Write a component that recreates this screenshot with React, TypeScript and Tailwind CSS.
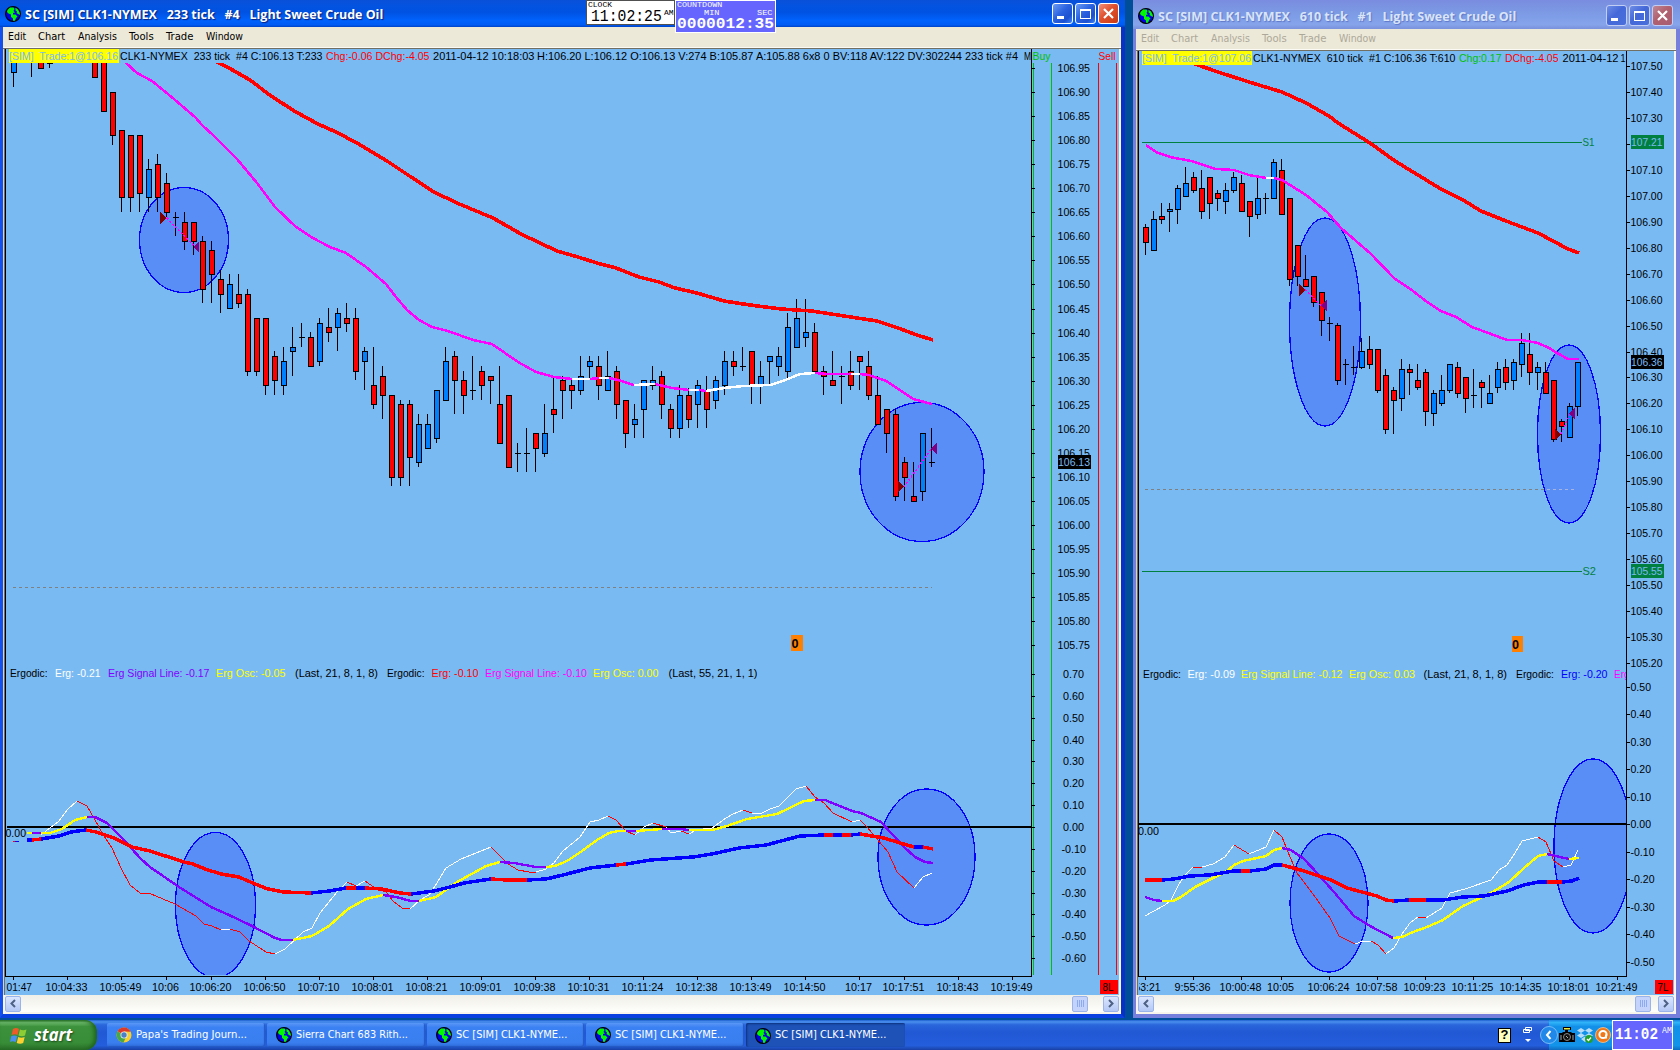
import React, { useLayoutEffect, useRef, useState } from "react";

const SANS = "font-['Liberation_Sans',Arial,sans-serif]";
const UI = "font-['DejaVu_Sans_Condensed','DejaVu_Sans',Tahoma,sans-serif]";

type Candle = [number, "r" | "b" | "k", number, number, number, number];

/** Text squeezed or stretched to an exact width. */
function Fit({ w, className = "", children }: { w: number; className?: string; children: string }) {
  const ref = useRef<HTMLSpanElement>(null);
  const [scale, setScale] = useState(1);
  useLayoutEffect(() => {
    if (ref.current) setScale(w / ref.current.offsetWidth);
  }, [w]);
  return (
    <span className={`block shrink-0 whitespace-pre ${className}`} style={{ width: w }}>
      <span ref={ref} className="block w-max origin-left" style={{ transform: `scaleX(${scale})` }}>
        {children}
      </span>
    </span>
  );
}

/** Chart text placed between x1 and x2, centred vertically on y. */
function T({ x1, x2, y, c = "#000", children }: { x1: number; x2: number; y: number; c?: string; children: string }) {
  return (
    <text
      x={x1 - 0.5}
      y={Math.round(y) + 4}
      fill={c}
      fontSize="11"
      textLength={x2 - x1}
      lengthAdjust="spacingAndGlyphs"
      className="whitespace-pre"
    >
      {children}
    </text>
  );
}

const COLORS: Record<string, string> = {
  r: "#ff0000",
  b: "#0000ff",
  w: "#ffffff",
  m: "#ff00ff",
  y: "#ffff00",
  p: "#8000ff",
};

/** Polyline whose colour changes at each "|"; a run starts at the end of the one before. */
function Line({ d, w }: { d: string; w: number }) {
  let last = "";
  return (
    <g fill="none" strokeWidth={w} strokeLinejoin="round">
      {d.split("|").map((run, i) => {
        const parts = run.trim().split(/\s+/);
        const pts = [last, ...parts.slice(1)].filter(Boolean);
        last = pts[pts.length - 1];
        return <polyline key={i} points={pts.join(" ")} stroke={COLORS[parts[0]]} />;
      })}
    </g>
  );
}

function Candles({ data, x0, step }: { data: Candle[]; x0: number; step: number }) {
  return (
    <g>
      {data.map(([i, c, hi, top, bot, lo]) => {
        const x = x0 + i * step;
        return (
          <g key={i}>
            <rect x={x} y={hi} width="1" height={lo - hi} fill="#000" />
            {c === "k" ? (
              <rect x={x - 2} y={top} width="6" height="1" fill="#000" />
            ) : (
              <>
                <rect x={x - 2} y={top} width="6" height={bot - top} fill="#000" />
                <rect x={x - 1} y={top + 1} width="4" height={bot - top - 2} fill={c === "r" ? "#ff0000" : "#0080ff"} />
              </>
            )}
          </g>
        );
      })}
    </g>
  );
}

function Oval({ cx, cy, rx, ry }: { cx: number; cy: number; rx: number; ry: number }) {
  return <ellipse cx={cx} cy={cy} rx={rx} ry={ry} fill="#5a8ef7" stroke="#0000ff" strokeWidth="1.300" />;
}

const CANDLES_233: Candle[] = [
  [0, "b", 60, 60, 73, 87], [2, "k", 60, 60, 60, 77], [3, "r", 60, 60, 69, 69], [4, "k", 60, 63, 63, 68],
  [9, "r", 60, 60, 78, 78], [10, "r", 60, 60, 112, 112], [11, "r", 92, 92, 136, 145], [12, "r", 130, 130, 198, 212],
  [13, "r", 135, 135, 198, 212], [14, "r", 135, 135, 194, 212], [15, "b", 159, 169, 198, 212], [16, "r", 154, 164, 198, 212],
  [17, "r", 173, 183, 213, 217], [18, "k", 212, 217, 217, 236], [19, "r", 212, 222, 242, 250], [20, "r", 222, 222, 242, 255],
  [21, "r", 236, 241, 290, 303], [22, "r", 241, 250, 275, 303], [23, "r", 270, 279, 295, 313], [24, "b", 274, 284, 309, 309],
  [25, "r", 274, 294, 304, 308], [26, "r", 289, 294, 372, 376], [27, "r", 318, 318, 372, 376], [28, "r", 318, 318, 386, 395],
  [29, "r", 351, 356, 381, 395], [30, "b", 347, 361, 386, 395], [31, "b", 327, 347, 352, 376], [32, "k", 323, 337, 337, 347],
  [33, "r", 332, 337, 367, 367], [34, "b", 318, 323, 362, 366], [35, "r", 308, 327, 333, 342], [36, "b", 308, 313, 328, 351],
  [37, "r", 303, 318, 324, 332], [38, "r", 308, 318, 372, 380], [39, "b", 347, 351, 362, 390], [40, "r", 347, 385, 405, 409],
  [41, "r", 366, 376, 396, 419], [42, "r", 395, 395, 478, 486], [43, "r", 400, 404, 478, 486], [44, "r", 400, 404, 458, 486],
  [45, "b", 414, 424, 463, 467], [46, "b", 414, 424, 449, 449], [47, "b", 390, 390, 439, 443], [48, "b", 347, 361, 401, 401],
  [49, "r", 351, 356, 381, 414], [50, "r", 371, 380, 396, 414], [51, "k", 356, 390, 390, 400], [52, "r", 366, 371, 386, 400],
  [53, "r", 376, 376, 381, 404], [54, "r", 366, 404, 444, 444], [55, "r", 395, 395, 468, 468], [56, "k", 443, 453, 453, 472],
  [57, "k", 428, 453, 453, 472], [58, "r", 433, 433, 449, 472], [59, "b", 404, 433, 454, 457], [60, "r", 378, 409, 415, 433],
  [61, "r", 376, 380, 391, 419], [62, "r", 379, 385, 391, 409], [63, "b", 356, 376, 391, 395], [64, "b", 356, 361, 367, 379],
  [65, "r", 356, 366, 386, 400], [66, "b", 351, 376, 391, 391], [67, "r", 366, 371, 405, 419], [68, "r", 400, 400, 434, 448],
  [69, "b", 404, 419, 425, 438], [70, "b", 380, 380, 410, 438], [71, "b", 366, 380, 386, 390], [72, "r", 371, 376, 405, 419],
  [73, "r", 404, 409, 429, 438], [74, "b", 385, 395, 429, 438], [75, "r", 388, 395, 420, 428], [76, "b", 380, 385, 405, 428],
  [77, "r", 376, 390, 410, 428], [78, "b", 376, 380, 401, 409], [79, "b", 351, 361, 386, 395], [80, "r", 351, 361, 367, 376],
  [81, "k", 347, 366, 366, 371], [82, "r", 351, 351, 386, 404], [83, "b", 361, 376, 386, 404], [84, "b", 356, 356, 362, 384],
  [85, "b", 347, 356, 367, 376], [86, "b", 313, 327, 372, 380], [87, "b", 299, 318, 348, 348], [88, "b", 299, 332, 338, 347],
  [89, "r", 323, 332, 372, 372], [90, "r", 366, 371, 377, 395], [91, "r", 351, 380, 386, 386], [92, "k", 366, 376, 376, 404],
  [93, "r", 351, 371, 386, 390], [94, "r", 356, 356, 362, 390], [95, "r", 351, 366, 396, 400], [96, "r", 376, 395, 425, 425],
  [97, "r", 409, 409, 434, 453], [98, "r", 409, 414, 497, 501], [99, "r", 457, 462, 478, 501], [100, "r", 462, 496, 502, 502],
  [101, "b", 433, 433, 492, 501], [102, "k", 428, 462, 462, 467],
];

const CANDLES_610: Candle[] = [
  [0, "r", 224, 227, 243, 255], [1, "b", 211, 219, 251, 251], [2, "r", 203, 216, 220, 224], [3, "b", 203, 209, 212, 232],
  [4, "b", 185, 188, 210, 224], [5, "b", 167, 183, 197, 197], [6, "r", 172, 177, 191, 193], [7, "r", 170, 188, 212, 219],
  [8, "r", 177, 177, 204, 219], [9, "r", 190, 193, 199, 211], [10, "b", 183, 190, 202, 214], [11, "b", 172, 177, 191, 193],
  [12, "r", 175, 183, 212, 212], [13, "r", 201, 201, 217, 237], [14, "b", 177, 198, 215, 219], [15, "k", 193, 198, 198, 214],
  [16, "b", 159, 162, 199, 199], [17, "r", 159, 170, 215, 215], [18, "r", 198, 198, 280, 286], [19, "r", 245, 245, 277, 286],
  [20, "r", 255, 279, 287, 287], [21, "r", 276, 276, 303, 307], [22, "r", 292, 292, 321, 336], [23, "k", 317, 323, 323, 341],
  [24, "r", 323, 325, 381, 385], [25, "k", 359, 364, 364, 385], [26, "k", 346, 367, 367, 375], [27, "b", 338, 351, 368, 369],
  [28, "r", 336, 349, 365, 369], [29, "r", 349, 349, 391, 393], [30, "r", 369, 375, 430, 434], [31, "r", 387, 390, 401, 434],
  [32, "b", 359, 369, 399, 411], [33, "r", 364, 369, 373, 395], [34, "r", 364, 380, 388, 390], [35, "r", 369, 372, 412, 426],
  [36, "b", 390, 393, 414, 426], [37, "b", 375, 390, 404, 406], [38, "b", 364, 364, 391, 393], [39, "r", 362, 367, 394, 398],
  [40, "r", 377, 377, 399, 413], [41, "k", 369, 395, 395, 408], [42, "r", 380, 382, 388, 408], [43, "b", 375, 393, 404, 404],
  [44, "b", 362, 369, 388, 393], [45, "r", 359, 367, 383, 390], [46, "b", 359, 362, 381, 390], [47, "b", 333, 343, 365, 377],
  [48, "r", 333, 354, 373, 385], [49, "b", 362, 367, 373, 390], [50, "r", 362, 372, 394, 394], [51, "r", 380, 380, 440, 442],
  [52, "r", 419, 421, 427, 442], [53, "b", 403, 406, 438, 438], [54, "b", 362, 362, 407, 416],
];

const TIMES_233: [number, string][] = [
  [67, "10:04:33"], [121, "10:05:49"], [166, "10:06"], [211, "10:06:20"], [265, "10:06:50"], [319, "10:07:10"],
  [373, "10:08:01"], [427, "10:08:21"], [481, "10:09:01"], [535, "10:09:38"], [589, "10:10:31"], [643, "10:11:24"],
  [697, "10:12:38"], [751, "10:13:49"], [805, "10:14:50"], [859, "10:17"], [904, "10:17:51"], [958, "10:18:43"], [1012, "10:19:49"],
];

const TIMES_610: [number, string][] = [
  [1193, "9:55:36"], [1241, "10:00:48"], [1281, "10:05"], [1329, "10:06:24"], [1377, "10:07:58"], [1425, "10:09:23"],
  [1473, "10:11:25"], [1521, "10:14:35"], [1569, "10:18:01"], [1617, "10:21:49"],
];

function TimeAxis({ items }: { items: [number, string][] }) {
  return (
    <g>
      {items.map(([x, s]) => {
        const w = s.length === 8 ? 42 : s.length === 7 ? 36 : 27;
        return (
          <g key={s}>
            <rect x={x} y="977" width="1" height="3" fill="#000" />
            <T x1={x - w / 2} x2={x + w / 2} y={987}>{s}</T>
          </g>
        );
      })}
    </g>
  );
}

function Chart233() {
  const prices = Array.from({ length: 25 }, (_, i) => 106.95 - i * 0.05);
  const erg = Array.from({ length: 14 }, (_, i) => 0.7 - i * 0.1);
  return (
    <svg width="1114" height="946" viewBox="5 49 1114 946" className={`block shrink-0 bg-[#7abaf3] ${SANS}`} shapeRendering="crispEdges">
      <defs>
        <clipPath id="p233"><rect x="6" y="63" width="1025" height="912" /></clipPath>
        <clipPath id="h233"><rect x="6" y="49" width="1025" height="946" /></clipPath>
      </defs>
      <g clipPath="url(#p233)">
        <Oval cx={184} cy={240} rx={44.500} ry={52.500} />
        <Oval cx={922} cy={472} rx={62} ry={69.5} />
        <Oval cx={215.5} cy={905} rx={40} ry={72.5} />
        <Oval cx={926.5} cy={857} rx={48.5} ry={68} />
        <Candles data={CANDLES_233} x0={13} step={9} />
        <line x1="13" x2="932" y1="587.5" y2="587.5" stroke="#808080" strokeDasharray="3 3" />
        <Line w={3.600} d="r 217,62 229,68 250,80 271,96 296,112 318,124 336,132 357,143 387,161 411,177 434,192 457,203 493,218 521,234 540,243 557,251 578,257 597,263 616,268 639,277 659,282 675,288 697,293 724,301 750,305 781,309 812,311 844,316 877,321 898,328 917,335 933,340" />
        <Line w={2.500} d="m 125,62 137,73 152,81 174,99 195,117 202,125 214,136 237,159 257,183 275,207 296,227 311,237 330,247 346,253 366,267 386,284 396,297 407,310 419,320 432,327 448,331 473,340 492,344 518,362 536,372 554,377 572,379|w 590,379|m 599,378|w 609,378|m 618,380 634,385|w 655,384|m 672,388 689,390|w 699,390|m 706,391|w 724,388 743,386 770,385 783,381 800,374 815,373|m 827,374 851,374|w 860,374|m 869,375 886,381 913,399 932,404" />
        <path d="M167 218L194 246" stroke="#ff00ff" strokeWidth="1.5" strokeDasharray="2 2" />
        <path d="M160 212v12l7-6z" fill="#800000" />
        <path d="M199 241v12l-6-6z" fill="#800080" />
        <path d="M904 487L931 449" stroke="#ff00ff" strokeWidth="1.5" strokeDasharray="2 2" />
        <path d="M898 481v11l6-5.500z" fill="#800000" />
        <path d="M937 443v11l-6-5.500z" fill="#800080" />
        <rect x="7" y="826" width="1025" height="2" fill="#000" />
        <Line w={1} d="w 41,835 46,831 59,821 68,809 77,801|r 87,806 95,820 104,836 112,848 121,868 130,885 140,893 151,894 175,904 196,916 204,924 212,926 221,930|w 230,929|r 240,932 249,941 266,952 275,954|w 285,949 303,932 312,928 320,913 337,892 347,882|r 356,886|w 365,881|r 375,888 386,892 393,901 402,908 410,909|w 420,900 429,895 437,883 446,868 461,859 491,847|r 500,856 508,864 518,870 529,872 536,872|w 546,869 554,863 563,851 580,837 590,822 599,820 608,816|r 616,820 626,831 635,835|w 644,827 653,823|r 666,827|w 671,833 681,831|r 689,834|w 698,829|r 703,829|w 712,828 726,818 733,814 743,810|r 752,813|w 762,813 770,809 779,806 796,789 806,786|r 815,797 824,803 833,813 852,822|w 860,820|r 867,827 877,839 888,852 897,872 914,888|w 923,877 932,873" />
        <Line w={2.400} d="y 27,833 32,833|p 41,833|y 50,833 62,829 75,820 87,817|p 95,817 107,823 121,837 141,859 150,867 179,887 211,907 229,915 250,925 275,938 282,940 293,940|y 312,936 329,926 348,909 366,899 383,895|p 396,897 411,901 419,901|y 436,897 457,882 486,866 500,862|p 514,863 536,867 546,867|y 555,866 567,861 582,851 597,840 609,833 618,831 626,831|p 636,831|y 662,829|p 680,829 689,830|y 712,830 727,826 747,819 777,814 804,801 815,800|p 825,800 852,811 861,813 881,822 892,834 904,847 915,857 925,862 933,863" />
        <Line w={3.500} d="b 27,840 32,840|r 41,839|b 59,836 71,832 86,830|r 96,832 114,838 132,847 150,851 184,862 193,864 205,869 221,874 239,877 255,884 268,889 284,892 311,893|b 329,891 346,888|r 356,888|b 365,888|r 382,889 400,893 411,894|b 434,891 450,887 464,883 491,879|r 507,880 527,880|b 546,879 563,875 590,868 616,865|r 626,864|b 651,860 693,857 712,854 739,848 766,845 800,836 824,835|r 833,835|b 842,835|r 851,835|b 860,834|r 884,838 900,843 914,847|b 923,847|r 933,849" />
      </g>
      <g clipPath="url(#h233)">
        <rect x="9" y="49" width="110" height="14" fill="#ffff00" />
        <T x1={9.500} x2={118.500} y={56} c="#7abaf3">{"[SIM]  Trade:1@106.16"}</T>
        <T x1={120.500} x2={323} y={56}>{"CLK1-NYMEX  233 tick  #4 C:106.13 T:233"}</T>
        <T x1={326.500} x2={430} y={56} c="#ff0000">Chg:-0.06 DChg:-4.05</T>
        <T x1={433.500} x2={535} y={56}>2011-04-12 10:18:03</T>
        <T x1={537.500} x2={1018.500} y={56}>H:106.20 L:106.12 O:106.13 V:274 B:105.87 A:105.88 6x8 0 BV:118 AV:122 DV:302244 233 tick #4</T>
        <T x1={1024.500} x2={1031.500} y={56}>M</T>
      </g>
      <T x1={1033} x2={1051} y={56} c="#00c000">Buy</T>
      <T x1={1099} x2={1116} y={56} c="#ff0000">Sell</T>
      <rect x="5" y="49" width="1" height="928" fill="#000" />
      <rect x="5" y="976" width="1027" height="1" fill="#000" />
      <rect x="1031" y="49" width="1" height="928" fill="#000" />
      <rect x="1033" y="63" width="1" height="912" fill="#00c000" />
      <rect x="1051" y="63" width="1" height="912" fill="#00c000" />
      <rect x="1098" y="63" width="1" height="912" fill="#ff0000" />
      <rect x="1116" y="63" width="1" height="912" fill="#ff0000" />
      {prices.map((p, i) => {
        const y = 68 + i * 24.05;
        return (
          <g key={i}>
            <rect x="1032" y={Math.round(y)} width="3" height="1" fill="#000" />
            <T x1={1058} x2={1090.500} y={y}>{p.toFixed(2)}</T>
          </g>
        );
      })}
      {erg.map((v, i) => {
        const y = 674 + i * 21.86;
        const s = i === 7 ? "0.00" : v.toFixed(2);
        const neg = i > 7;
        return (
          <g key={i}>
            <rect x="1032" y={Math.round(y)} width="3" height="1" fill="#000" />
            <T x1={neg ? 1062 : 1063.500} x2={neg ? 1086.500 : 1084.500} y={y}>{s}</T>
          </g>
        );
      })}
      <rect x="1058" y="455" width="33" height="14" fill="#000" />
      <T x1={1058.500} x2={1090.500} y={462} c="#7abaf3">106.13</T>
      <rect x="791" y="635" width="12" height="16" fill="#ff8000" />
      <text x="791.500" y="648" fontSize="13" fontWeight="bold" textLength="7" lengthAdjust="spacingAndGlyphs">0</text>
      <T x1={10.500} x2={48} y={673}>Ergodic:</T>
      <T x1={55.500} x2={101} y={673} c="#fff">Erg: -0.21</T>
      <T x1={108.500} x2={210} y={673} c="#8000ff">Erg Signal Line: -0.17</T>
      <T x1={216.500} x2={286} y={673} c="#ffff00">Erg Osc: -0.05</T>
      <T x1={295.500} x2={378.500} y={673}>(Last, 21, 8, 1, 8)</T>
      <T x1={387.500} x2={425} y={673}>Ergodic:</T>
      <T x1={432} x2={479} y={673} c="#ff0000">Erg: -0.10</T>
      <T x1={485.500} x2={587.500} y={673} c="#ff00ff">Erg Signal Line: -0.10</T>
      <T x1={593.500} x2={659} y={673} c="#ffff00">Erg Osc: 0.00</T>
      <T x1={669} x2={758} y={673}>(Last, 55, 21, 1, 1)</T>
      <T x1={6} x2={26.500} y={833}>0.00</T>
      <rect x="13" y="841" width="2" height="1" fill="#ff0000" />
      <rect x="15" y="841" width="4" height="1" fill="#0000ff" />
      <rect x="13" y="977" width="1" height="3" fill="#000" />
      <T x1={7} x2={32.500} y={987}>01:47</T>
      <TimeAxis items={TIMES_233} />
      <rect x="1100" y="980" width="18" height="14" fill="#ff0000" />
      <T x1={1103} x2={1114} y={987}>8L</T>
    </svg>
  );
}

function Chart610() {
  const prices = Array.from({ length: 24 }, (_, i) => 107.5 - i * 0.1);
  const erg = Array.from({ length: 11 }, (_, i) => 0.5 - i * 0.1);
  return (
    <svg width="536" height="944" viewBox="1138 51 536 944" className={`block shrink-0 bg-[#7abaf3] ${SANS}`} shapeRendering="crispEdges">
      <defs>
        <clipPath id="p610"><rect x="1139" y="65" width="487" height="910" /></clipPath>
        <clipPath id="h610"><rect x="1139" y="51" width="487" height="944" /></clipPath>
      </defs>
      <g clipPath="url(#p610)">
        <Oval cx={1325} cy={322} rx={35.500} ry={104} />
        <Oval cx={1569} cy={434} rx={31.500} ry={89} />
        <Oval cx={1329} cy={903} rx={39} ry={69} />
        <Oval cx={1593} cy={846} rx={39} ry={87} />
        <rect x="1142" y="142" width="440" height="1" fill="#008040" />
        <rect x="1142" y="571" width="440" height="1" fill="#008040" />
        <Candles data={CANDLES_610} x0={1145} step={8} />
        <line x1="1145" x2="1546" y1="489.5" y2="489.5" stroke="#808080" strokeDasharray="3 3" />
        <line x1="1547" x2="1577" y1="489.5" y2="489.5" stroke="#a8b4e0" strokeDasharray="3 3" />
        <Line w={3.600} d="r 1195,64 1218,72 1249,82 1282,92 1306,103 1329,116 1338,123 1370,143 1395,161 1441,189 1463,200 1481,211 1506,221 1538,233 1568,249 1579,253" />
        <Line w={2.500} d="m 1146,145 1156,152 1170,157 1191,161 1216,169 1234,170 1249,175 1266,178|w 1274,178|m 1282,180 1290,185 1306,195 1327,212 1341,228 1356,241 1370,253 1395,279 1413,291 1427,302 1441,311 1456,317 1472,327 1491,334 1507,340 1522,340 1538,343 1549,348 1557,353 1568,359 1579,359" />
        <path d="M1305 290L1321 305" stroke="#ff00ff" strokeWidth="1.5" strokeDasharray="2 2" />
        <path d="M1299 284v12l6-6z" fill="#800000" />
        <path d="M1327 300v11l-6-5.500z" fill="#800080" />
        <path d="M1561 434L1570 414" stroke="#ff00ff" strokeWidth="1.5" strokeDasharray="2 2" />
        <path d="M1555 429v11l6-5.500z" fill="#800000" />
        <path d="M1575 408v11l-6-5.500z" fill="#800080" />
        <rect x="1139" y="823" width="488" height="2" fill="#000" />
        <Line w={1} d="w 1145,916 1152,912 1165,905 1171,900 1179,884 1185,875 1193,867|r 1202,867|w 1213,864 1225,857 1234,845|r 1249,854|w 1266,847 1274,830|r 1282,837 1290,857 1297,873 1313,894 1330,918 1339,936 1355,944|w 1363,941 1371,941|r 1378,945 1386,954|w 1394,948 1402,934 1410,923 1418,917|r 1426,918|w 1442,908 1450,893 1465,889 1491,880 1499,870 1507,865 1515,853 1522,841 1538,837|r 1546,842 1554,861 1563,867|w 1571,865 1578,850" />
        <Line w={2.400} d="p 1145,897 1154,900 1162,901|y 1173,901 1181,897 1195,887 1227,871 1234,865 1243,861 1266,856 1274,850 1282,848|p 1291,850 1304,859 1318,874 1334,892 1354,916 1370,926 1393,938|y 1402,937 1413,932 1427,927 1443,920 1463,906 1491,893 1509,882 1524,868 1538,856 1547,854|p 1569,859|y 1579,858" />
        <Line w={3.500} d="r 1145,880 1162,880|b 1174,879 1190,876 1209,875 1234,871 1241,871|r 1250,871|b 1266,869 1274,865 1282,865|r 1304,871 1331,880 1347,888 1377,896 1386,900 1394,901|b 1409,900|r 1426,900|b 1443,900 1463,897 1484,896 1507,891 1524,885 1538,882 1547,882|r 1554,882 1562,882|b 1572,881 1579,878" />
      </g>
      <g clipPath="url(#h610)">
        <rect x="1142" y="51" width="110" height="14" fill="#ffff00" />
        <T x1={1142.500} x2={1251.500} y={58} c="#7abaf3">{"[SIM]  Trade:1@107.06"}</T>
        <T x1={1253.500} x2={1456} y={58}>{"CLK1-NYMEX  610 tick  #1 C:106.36 T:610"}</T>
        <T x1={1459.500} x2={1502} y={58} c="#00c000">Chg:0.17</T>
        <T x1={1505.500} x2={1559} y={58} c="#ff0000">DChg:-4.05</T>
        <T x1={1563} x2={1619} y={58}>2011-04-12</T>
        <T x1={1621} x2={1626} y={58}>1</T>
        <T x1={1143.500} x2={1181.500} y={674}>Ergodic:</T>
        <T x1={1188} x2={1235.500} y={674} c="#fff">Erg: -0.09</T>
        <T x1={1241.500} x2={1343} y={674} c="#ffff00">Erg Signal Line: -0.12</T>
        <T x1={1349.500} x2={1415.500} y={674} c="#ffff00">Erg Osc: 0.03</T>
        <T x1={1424} x2={1507.500} y={674}>(Last, 21, 8, 1, 8)</T>
        <T x1={1516.500} x2={1554.500} y={674}>Ergodic:</T>
        <T x1={1561.500} x2={1608} y={674} c="#0000ff">Erg: -0.20</T>
        <T x1={1614.500} x2={1630} y={674} c="#ff00ff">Erg</T>
        <T x1={1138.500} x2={1159.500} y={831}>0.00</T>
        <T x1={1135} x2={1161} y={987}>53:21</T>
      </g>
      <T x1={1583} x2={1595} y={142} c="#008040">S1</T>
      <T x1={1583} x2={1596.500} y={571} c="#008040">S2</T>
      <rect x="1138" y="51" width="1" height="926" fill="#000" />
      <rect x="1138" y="976" width="489" height="1" fill="#000" />
      <rect x="1626" y="51" width="1" height="926" fill="#000" />
      <rect x="1145" y="977" width="1" height="3" fill="#000" />
      {prices.map((p, i) => {
        const y = 66.300 + i * 25.930;
        return (
          <g key={i}>
            <rect x="1627" y={Math.round(y)} width="3" height="1" fill="#000" />
            {i !== 3 && <T x1={1631} x2={1663} y={y}>{p.toFixed(2)}</T>}
          </g>
        );
      })}
      {erg.map((v, i) => {
        const y = 687 + i * 27.45;
        const neg = i > 5;
        return (
          <g key={i}>
            <rect x="1627" y={Math.round(y)} width="3" height="1" fill="#000" />
            <T x1={1631} x2={neg ? 1655 : 1651.500} y={y}>{i === 5 ? "0.00" : v.toFixed(2)}</T>
          </g>
        );
      })}
      <rect x="1631" y="135" width="33" height="14" fill="#008040" />
      <T x1={1631.500} x2={1663} y={142} c="#7abaf3">107.21</T>
      <rect x="1631" y="355" width="33" height="14" fill="#000" />
      <T x1={1631.500} x2={1663} y={362} c="#7abaf3">106.36</T>
      <rect x="1631" y="564" width="33" height="14" fill="#008040" />
      <T x1={1631.500} x2={1663} y={571} c="#7abaf3">105.55</T>
      <rect x="1512" y="636" width="11" height="16" fill="#ff8000" />
      <text x="1512" y="649" fontSize="13" fontWeight="bold" textLength="7" lengthAdjust="spacingAndGlyphs">0</text>
      <TimeAxis items={TIMES_610} />
      <rect x="1655" y="980" width="18" height="14" fill="#ff0000" />
      <T x1={1658} x2={1669} y={987}>7L</T>
    </svg>
  );
}

function Globe() {
  return (
    <svg width="16" height="16" viewBox="0 0 16 16" className="shrink-0">
      <circle cx="8" cy="8" r="7.400" fill="#0000e0" stroke="#000" strokeWidth="1.200" />
      <path d="M2.500 4L5 1.500h3.500L9.500 3 8.500 5l1.500 1.500-2 .5v1.500l2.500 0 2 2-1.500 1.500L10 14.800H8V12.500L6 11V8.500L3.500 7.500 2 6zM10.500 1.800l2.500 1.700 1.800 3.500v2L13 8l-1.500-1 .5-1.500-1.500-1z" fill="#00f800" />
    </svg>
  );
}

function TitleButtons({ active }: { active: boolean }) {
  const blue = active
    ? "bg-[linear-gradient(135deg,#6a9cf5,#2a62e0_45%,#1c50d0_75%,#3f86f8)] border-white"
    : "bg-[linear-gradient(135deg,#6f8ee6,#4468d8_45%,#4a70dc)] border-[#c3cef4]";
  const red = active
    ? "bg-[linear-gradient(135deg,#f0907a,#e0502c_45%,#c83a14)] border-white"
    : "bg-[linear-gradient(135deg,#c08896,#b0606e_45%,#a85c74)] border-[#c3cef4]";
  const box = "flex h-[21px] w-[21px] items-center justify-center rounded-[3px] border";
  return (
    <div className="flex gap-[2px]">
      <span className={`${box} ${blue}`}>
        <svg width="15" height="15"><rect x="2" y="10" width="7" height="3" fill="#fff" /></svg>
      </span>
      <span className={`${box} ${blue}`}>
        <svg width="15" height="15" shapeRendering="crispEdges"><path d="M2.500 3.500h10v9h-10zM2 4.500h11" fill="none" stroke="#fff" /></svg>
      </span>
      <span className={`${box} ${red}`}>
        <svg width="15" height="15"><path d="M3 3l9 9M12 3l-9 9" stroke="#fff" strokeWidth="2.200" /></svg>
      </span>
    </div>
  );
}

const MENU: [string, number, number][] = [
  ["Edit", 18, 12], ["Chart", 27, 12.5], ["Analysis", 39, 12], ["Tools", 24.5, 12.5], ["Trade", 27.5, 13], ["Window", 37, 0],
];

function MenuBar({ dim }: { dim?: boolean }) {
  return (
    <div className={`flex h-5 shrink-0 items-center bg-[#ece9d8] pl-[5px] text-[11px] ${UI} ${dim ? "text-[#aca899]" : "text-black"}`}>
      {MENU.map(([s, w, gap]) => (
        <span key={s} className="flex" style={{ marginRight: gap }}>
          <Fit w={w}>{s}</Fit>
        </span>
      ))}
    </div>
  );
}

function ScrollBtn({ dir }: { dir: "l" | "r" }) {
  return (
    <span className="flex h-4 w-4 items-center justify-center rounded-[2px] border border-[#9ab3e8] bg-[linear-gradient(#dbe6fe,#b4c8f6)]">
      <svg width="8" height="9">
        <path d={dir === "l" ? "M6 1L2.500 4.500 6 8" : "M2 1l3.500 3.500L2 8"} fill="none" stroke="#4d6185" strokeWidth="2" />
      </svg>
    </span>
  );
}

function ScrollBar({ thumbGap }: { thumbGap: number }) {
  return (
    <div className="flex h-[17px] shrink-0 items-center bg-[linear-gradient(#f0efe8,#fefefb)]">
      <ScrollBtn dir="l" />
      <span className="grow" />
      <span
        className="flex h-4 w-4 items-center justify-center gap-px rounded-[2px] border border-[#9ab3e8] bg-[#c3d3fb]"
        style={{ marginRight: thumbGap }}
      >
        <i className="h-[7px] w-px bg-[#8caaf0]" />
        <i className="h-[7px] w-px bg-[#8caaf0]" />
        <i className="h-[7px] w-px bg-[#8caaf0]" />
        <i className="h-[7px] w-px bg-[#8caaf0]" />
      </span>
      <ScrollBtn dir="r" />
    </div>
  );
}

function TaskButton({ w, label, labelW, active, icon }: { w: number; label: string; labelW: number; active?: boolean; icon: React.ReactNode }) {
  return (
    <div
      className={`flex h-6 shrink-0 items-center gap-1 rounded-[2px] pl-[9px] text-[11px] text-white ${UI} ${
        active
          ? "bg-[#1e52b7] shadow-[inset_1px_1px_2px_#0d317c] pt-px"
          : "bg-[linear-gradient(#5a97f7,#3c81f3_18%,#3a7ff0_80%,#2f6cdc)] shadow-[inset_-1px_-1px_1px_#2458c0]"
      }`}
      style={{ width: w }}
    >
      {icon}
      <Fit w={labelW}>{label}</Fit>
    </div>
  );
}

function Chrome() {
  return (
    <svg width="16" height="16" viewBox="0 0 16 16" className="shrink-0">
      <circle cx="8" cy="8" r="7.500" fill="#f8cf2c" />
      <path d="M8 8L1.500 4.300A7.500 7.500 0 0 1 14.700 4.800L8 4.600z" fill="#dd3a2c" />
      <path d="M1.500 4.300A7.500 7.500 0 0 0 7.500 15.500L10 10z" fill="#48a848" />
      <circle cx="8" cy="8" r="3.500" fill="#e8eefc" />
      <circle cx="8" cy="8" r="2.700" fill="#4a80c8" />
    </svg>
  );
}

function Taskbar() {
  return (
    <div className="flex h-[30px] shrink-0 items-center bg-[linear-gradient(#1f5fd0,#4a90ee_6%,#2a66dc_16%,#2158d4_40%,#245edc_85%,#1941a5)]">
      <div className="flex h-[30px] w-[97px] items-center rounded-r-[12px] bg-[linear-gradient(#2f7a2f,#6cb86c_8%,#3c923c_22%,#388e38_75%,#2a6f2a)] pl-[10px] shadow-[inset_-3px_0_4px_#1f641f]">
        <svg width="19" height="19" viewBox="0 0 19 19">
          <path d="M3 3q3-2 6 0L7.500 9Q5 7.500 1.500 9z" fill="#ee5a28" />
          <path d="M10 3.500q3 1.500 6.500 0L15 9.500q-3 1.500-6.500 0z" fill="#8ccc34" />
          <path d="M1.200 10.200q3-1.500 6 0l-1.500 6Q3 14.500 0 16z" fill="#4a90f0" />
          <path d="M8.200 11q3 1.500 6.500 0l-1.500 6q-3 1.500-6.500 0z" fill="#fcd030" />
        </svg>
        <Fit w={38} className="ml-[5px] font-['Open_Sans','Liberation_Sans',sans-serif] text-[17px] leading-5 font-bold text-white italic [text-shadow:1px_1px_2px_#1a4a1a]">
          start
        </Fit>
      </div>
      <div className="ml-[10px] flex gap-[2px]">
        <TaskButton w={158} label="Papa's Trading Journ..." labelW={111} icon={<Chrome />} />
        <TaskButton w={158} label="Sierra Chart 683 Rith..." labelW={112} icon={<Globe />} />
        <TaskButton w={157} label="SC [SIM] CLK1-NYME..." labelW={111} icon={<Globe />} />
        <TaskButton w={158} label="SC [SIM] CLK1-NYME..." labelW={111} icon={<Globe />} />
        <TaskButton w={159} label="SC [SIM] CLK1-NYME..." labelW={111} active icon={<Globe />} />
      </div>
      <span className="grow" />
      <span className="mr-[12px] flex h-[15px] w-[13px] items-center justify-center border border-black bg-[#ffffc0] font-['Liberation_Sans',sans-serif] text-[13px] font-bold text-black">
        ?
      </span>
      <svg width="10" height="18" className="mr-[16px]">
        <path d="M2.500 1.500h6v3h-6zM.5 3.500h6v3h-6z" fill="#2158d4" stroke="#fff" />
        <path d="M2 13h6l-3 3z" fill="#fff" />
      </svg>
      <div className="flex h-[30px] w-[131px] items-center bg-[linear-gradient(#1a80e0,#30b4f8_8%,#1290e9_22%,#1294ea_85%,#0d6cc0)]">
        <svg width="18" height="18" viewBox="0 0 18 18" className="-ml-[9px] shrink-0">
          <circle cx="9" cy="9" r="8.500" fill="#2088e8" stroke="#78bcf8" />
          <path d="M10.500 5L7 9l3.500 4" fill="none" stroke="#fff" strokeWidth="2" />
        </svg>
        <svg width="16" height="16" viewBox="0 0 16 16" className="ml-px shrink-0">
          <path d="M4 0h8v3H9v2h3l1 1h3v9H0V6h3l1-1h2V3H4z" fill="#000" />
          <rect x="5" y="1" width="6" height="1.500" fill="#f0e840" />
          <circle cx="8" cy="10" r="3.500" fill="#111" stroke="#888" />
          <path d="M7 9l2 2M2 8v5M14 8v5" stroke="#aaa" />
        </svg>
        <svg width="16" height="16" viewBox="0 0 16 16" className="ml-[2px] shrink-0">
          <path d="M4 1l4 2.500L4 6 0 3.500zM12 1l4 2.500L12 6 8 3.500zM4 6l4 2.500L4 11 0 8.500zM12 6l4 2.500L12 11 8 8.500zM8 9.500l4 2.500-4 3-4-3z" fill="#b8dcf8" />
          <circle cx="12" cy="12" r="4" fill="#20a030" />
          <path d="M10 12l1.500 1.500L14 10.500" fill="none" stroke="#fff" strokeWidth="1.300" />
        </svg>
        <svg width="16" height="16" viewBox="0 0 16 16" className="ml-[2px] shrink-0">
          <circle cx="8" cy="8" r="7.500" fill="#f07818" stroke="#f8c890" strokeWidth=".8" />
          <circle cx="8" cy="7.500" r="3.600" fill="none" stroke="#fff" strokeWidth="2" />
          <path d="M11 7.500v4" stroke="#fff" strokeWidth="2" />
        </svg>
        <div className="ml-[1px] flex h-[30px] w-[61px] items-start justify-between border border-white bg-[#6666ff] pl-[2px] font-['Liberation_Mono',monospace] font-bold text-white">
          <Fit w={43} className="pt-[3px] text-[16px] leading-[22px]">11:02</Fit>
          <Fit w={10} className="pt-[4px] text-[9px] leading-[12px] font-normal">AM</Fit>
        </div>
      </div>
    </div>
  );
}

const TITLE_FONT = "font-['Open_Sans','Noto_Sans',sans-serif] text-[13px] font-bold leading-[18px]";

export default function App() {
  return (
    <div className="relative flex h-[1050px] w-[1680px] flex-col overflow-hidden bg-[#004e98]">
      <div className="flex h-[1020px] shrink-0 items-start">
        <section className="flex h-[1018px] w-[1125px] shrink-0 flex-col bg-[#0a3fd8]">
          <header className="flex h-[27px] shrink-0 items-center bg-[linear-gradient(#0a50d8,#0453e0_20%,#0052e2_45%,#0062fc_75%,#005cf4_92%,#0042c4)] pr-[6px] pl-[5px]">
            <Globe />
            <Fit w={358.500} className={`ml-[4px] text-white [text-shadow:1px_1px_1px_#0a1f7a] ${TITLE_FONT}`}>
              {"SC [SIM] CLK1-NYMEX   233 tick   #4   Light Sweet Crude Oil"}
            </Fit>
            <span className="grow" />
            <TitleButtons active />
          </header>
          <div className="flex grow flex-col border-r-[4px] border-b-[4px] border-l-[3px] border-r-[#0831c8] border-b-[#0a3fe0] border-l-[#1450ec]">
            <MenuBar />
            <div className="h-px shrink-0 bg-[#fbfaf4]" />
            <div className="h-px shrink-0 bg-[#716f64]" />
            <div className="flex shrink-0">
              <div className="w-px bg-[#d8d4c4]" />
              <div className="w-px bg-[#716f64]" />
              <Chart233 />
              <div className="grow bg-[#f8f6ec]" />
            </div>
            <div className="flex grow flex-col bg-[#f8f6ec] pr-[2px] pl-[2px]">
              <ScrollBar thumbGap={15} />
            </div>
          </div>
        </section>
        <section className="ml-2 flex h-[1018px] w-[547px] shrink-0 flex-col bg-[#7a84dc]">
          <header className="flex h-[29px] shrink-0 items-center bg-[linear-gradient(#7a8ce0,#7b96e2_30%,#7f9ee8_60%,#86a4ea_85%,#7a90dc)] pt-[2px] pr-[7px] pl-[5px]">
            <Globe />
            <Fit w={358.500} className={`ml-[4px] text-[#d8e4f8] [text-shadow:1px_1px_1px_#6078c8] ${TITLE_FONT}`}>
              {"SC [SIM] CLK1-NYMEX   610 tick   #1   Light Sweet Crude Oil"}
            </Fit>
            <span className="grow" />
            <TitleButtons active={false} />
          </header>
          <div className="flex grow flex-col border-r-[4px] border-b-[4px] border-l-[3px] border-[#7680dc]">
            <MenuBar dim />
            <div className="h-px shrink-0 bg-[#fbfaf4]" />
            <div className="h-px shrink-0 bg-[#716f64]" />
            <div className="flex shrink-0">
              <div className="w-px bg-[#d8d4c4]" />
              <div className="w-px bg-[#716f64]" />
              <Chart610 />
              <div className="grow bg-[#f8f6ec]" />
            </div>
            <div className="flex grow flex-col bg-[#f8f6ec] pr-[2px] pl-[2px]">
              <ScrollBar thumbGap={7} />
            </div>
          </div>
        </section>
      </div>
      <Taskbar />

      {/* Floating desktop clock and countdown */}
      <div className="absolute top-0 left-[586px] flex items-start font-['Liberation_Mono',monospace]">
        <div className="flex h-[25px] w-[89px] flex-col border border-[#505050] bg-white pl-px text-black">
          <Fit w={24} className="h-[8px] text-[8px] leading-[8px]">CLOCK</Fit>
          <div className="flex h-[15px] items-start justify-between pl-[3px]">
            <Fit w={71} className="text-[16px] leading-[16px]">11:02:25</Fit>
            <Fit w={10} className="text-[8px] leading-[8px]">AM</Fit>
          </div>
        </div>
        <div className="flex h-[33px] w-[101px] flex-col border border-white bg-[#6666ff] pl-px text-white">
          <Fit w={45} className="h-[8px] text-[8px] leading-[8px]">COUNTDOWN</Fit>
          <div className="flex h-[8px] items-start justify-between pr-[3px] pl-[27px]">
            <Fit w={15} className="text-[8px] leading-[8px]">MIN</Fit>
            <Fit w={15} className="text-[8px] leading-[8px]">SEC</Fit>
          </div>
          <Fit w={97} className="text-[15px] leading-[15px] font-bold">0000012:35</Fit>
        </div>
      </div>
    </div>
  );
}
